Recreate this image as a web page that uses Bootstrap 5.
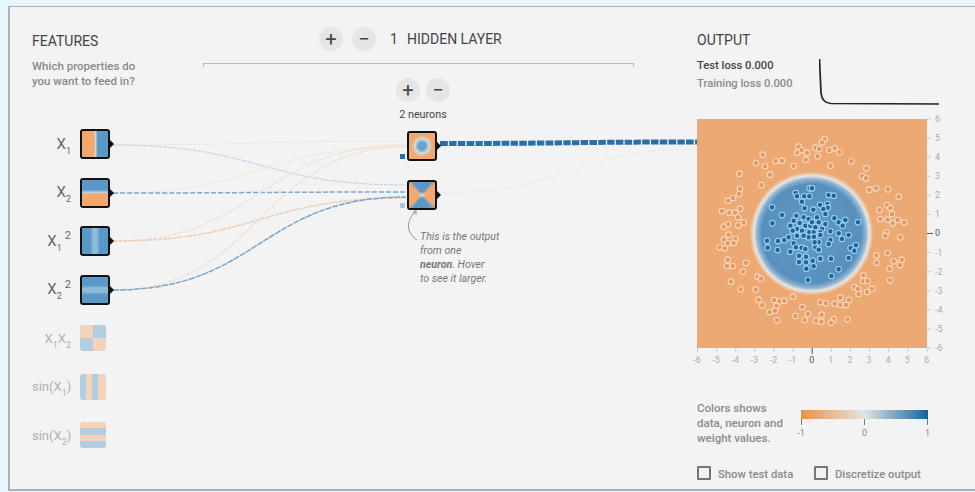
<!DOCTYPE html>
<html lang="en">
<head>
  <meta charset="UTF-8">
  <meta name="viewport" content="width=device-width, initial-scale=1.0">
  <title>Neural network playground</title>
  <link href="https://cdn.jsdelivr.net/npm/bootstrap@5.3.0/dist/css/bootstrap.min.css" rel="stylesheet">
  <style>
    html, body { height: 100%; overflow: hidden; }
    body { background: #e6f6fc; font-family: Roboto, "Liberation Sans", sans-serif; color: #444; padding: 6px 0 1px 8px; }
    .pg-frame { position: relative; isolation: isolate; height: 485px; background: #f3f3f3; border: 1px solid #a9b3b5; border-left-width: 2px; border-right: 0; border-bottom-width: 2px; }
    .pg-wires { position: absolute; left: -10px; top: -7px; z-index: -1; }
    .pg-title { font-size: 14px; line-height: 20px; height: 20px; color: #444; text-transform: uppercase; }
    .col-features { width: 193px; padding: 24px 0 0 22px; flex: none; }
    .col-network { width: 431px; padding-top: 20px; flex: none; }
    .col-output { margin-left: 63px; padding-top: 23px; flex: none; width: 270px; }
    .pg-sub { margin-top: 8px; font-size: 11.5px; line-height: 15px; font-weight: 500; color: #8a8a8a; height: 30px; }
    .feat-list { margin-top: 31px; }
    .feat-row { height: 48.5px; width: 88px; color: #666; }
    .feat-label { width: 39px; margin-right: 9px; text-align: right; font-size: 15px; line-height: 1; white-space: nowrap; flex: none; }
    .feat-label sub { font-size: 9px; bottom: -.55em; }
    .feat-label sup { font-size: 11px; top: -.6em; margin-left: 3px; }
    .feat-off .feat-label { color: #b0b0b0; font-size: 13px; }
    .thumb { position: relative; width: 30px; height: 30px; flex: none; border: 2px solid #111; border-radius: 3px; }
    .thumb::after { content: ""; position: absolute; right: -6px; top: 50%; margin-top: -4px; border: 4px solid transparent; border-left-color: #111; border-right-width: 0; }
    .feat-off .thumb { width: 26px; height: 26px; border: 0; opacity: .42; }
    .feat-off .thumb::after { display: none; }
    .th-x1 { background: linear-gradient(90deg, #f2a86e 46%, #cfd9dc 52%, #5a98c8 60%); }
    .th-x2 { background: linear-gradient(180deg, #5a98c8 38%, #b9d3e3 48%, #f2a86e 54%); }
    .th-x1q { background: linear-gradient(90deg, #5a98c8 32%, #8dbbd8 42% 58%, #5a98c8 68%); }
    .th-x2q { background: linear-gradient(180deg, #5a98c8 32%, #8dbbd8 42% 58%, #5a98c8 68%); }
    .th-xx { background: conic-gradient(#5a98c8 25%, #f2a86e 25% 50%, #5a98c8 50% 75%, #f2a86e 75%); }
    .th-s1 { background: repeating-linear-gradient(90deg, #5a98c8 0 6px, #f2a86e 6px 12px, #5a98c8 12px 18px, #f2a86e 18px 26px); }
    .th-s2 { background: repeating-linear-gradient(180deg, #f2a86e 0 6px, #5a98c8 6px 13px); }
    .round-btn { width: 24px; height: 24px; padding: 0; border: 0; border-radius: 50%; background: #e6e6e6; color: #444; font-size: 20px; line-height: 23px; }
    .layer-head { padding-left: 116px; height: 24px; }
    .layer-head .gap-btns { gap: 9px; }
    .layer-num { margin-left: 14px; font-size: 14px; line-height: 24px; width: 17px; }
    .layer-name { font-size: 14px; line-height: 24px; text-transform: uppercase; }
    .bracket { margin-top: 12px; height: 4px; border: 1px solid #bbb; border-bottom: 0; }
    .neuron-col { margin: 11px 0 0 190px; width: 60px; }
    .neuron-gap { gap: 6px; }
    .neuron-count { margin-top: 6px; font-size: 10.8px; line-height: 14px; white-space: nowrap; color: #444; }
    .neuron { position: relative; left: -1px; width: 30px; height: 30px; border: 2px solid #111; border-radius: 3px; }
    .neuron::after { content: ""; position: absolute; right: -6px; top: 50%; margin-top: -4px; border: 4px solid transparent; border-left-color: #111; border-right-width: 0; }
    .neuron-a { margin-top: 9px; background: radial-gradient(circle, #68a6d0 0 4px, #cfdde0 7px, #f2a86e 10.500px); }
    .neuron-b { margin-top: 19px; background: radial-gradient(circle, rgba(226,232,228,.8) 0, rgba(226,232,228,0) 4px), conic-gradient(#5a98c8 9%, #f2a86e 14% 36%, #5a98c8 41% 59%, #f2a86e 64% 86%, #5a98c8 91%); }
    .wt-tick { position: absolute; left: -9px; bottom: 0; width: 5px; height: 5px; background: #2a6fa8; }
    .neuron-b .wt-tick { background: #a9c8df; }
    .note-text { margin: 20px 0 0 217px; font-size: 10.6px; line-height: 14px; font-style: italic; color: #777; }
    .note-text b { font-weight: 700; }
    .stat-row { margin-top: 7px; height: 57px; }
    .stat-text { width: 122px; font-size: 11.2px; line-height: 18px; font-weight: 500; color: #8a8a8a; }
    .stat-test { color: #444; }
    .heat-plot { display: block; overflow: visible; }
    .heat-plot text { font-size: 9px; fill: #aaa; font-family: Roboto, "Liberation Sans", sans-serif; }
    .heat-plot .zero { fill: #555; }
    .legend-row { margin-top: 33px; }
    .legend-text { width: 100px; font-size: 11.500px; line-height: 15px; font-weight: 500; color: #8a8a8a; }
    .legend-svg text { font-size: 9px; fill: #888; font-family: Roboto, "Liberation Sans", sans-serif; }
    .check-row { margin-top: 20px; color: #8a8a8a; font-weight: 500; }
    .check-row .form-check { min-height: 0; margin: 0; padding-left: 21px; line-height: 14px; }
    .check-row .form-check:first-child { width: 117px; }
    .check-row .form-check-input { width: 14px; height: 14px; margin: 0 0 0 -21px; background-color: transparent; border: 2px solid #777; border-radius: 1px; }
    .check-row .form-check-label { font-size: 11.300px; }
  </style>
</head>
<body>
  <div class="pg-frame d-flex">
    <!-- wires go behind the nodes -->
    <svg class="pg-wires" width="975" height="492" fill="none">
      <path d="M113 145C260 145 260 141 406 141" stroke="#e6e9ec" stroke-width="1"/>
      <path d="M113 145C260 145 260 185 406 185" stroke="#c3d6e5" stroke-width="1.200" stroke-dasharray="4 1"/>
      <path d="M113 193C260 193 260 147 406 147" stroke="#f1e7dc" stroke-width="1"/>
      <path d="M113 193C260 193 260 192 406 192" stroke="#7ba8cb" stroke-width="1.500" stroke-dasharray="5 2"/>
      <path d="M113 241C260 241 260 145 406 145" stroke="#efdecd" stroke-width="1.100" stroke-dasharray="4 1"/>
      <path d="M113 241C260 241 260 198 406 198" stroke="#ebcdb2" stroke-width="1.500" stroke-dasharray="4 1"/>
      <path d="M113 290C260 290 260 147 406 147" stroke="#eedccb" stroke-width="1.100" stroke-dasharray="4 1"/>
      <path d="M113 290C260 290 260 197 406 197" stroke="#78a5c8" stroke-width="1.500" stroke-dasharray="6 1"/>
      <path d="M441 193C570 193 570 149 697 149" stroke="#efebe6" stroke-width="1.200"/>
      <path d="M440 143.500C570 143.500 570 142 697 142" stroke="#2a6fa8" stroke-width="5" stroke-dasharray="7.500 1.300"/>
      <path d="M415 212C407 220 405 232 417 240" stroke="#888" stroke-width=".9"/>
      <path d="M412.500 213L416 210.500L416 215" stroke="#888" stroke-width=".9"/>
    </svg>

    <div class="col-features">
      <div class="pg-title">Features</div>
      <div class="pg-sub">Which properties do<br>you want to feed in?</div>
      <div class="feat-list">
        <div class="feat-row d-flex align-items-center"><div class="feat-label">X<sub>1</sub></div><div class="thumb th-x1"></div></div>
        <div class="feat-row d-flex align-items-center"><div class="feat-label">X<sub>2</sub></div><div class="thumb th-x2"></div></div>
        <div class="feat-row d-flex align-items-center"><div class="feat-label">X<sub>1</sub><sup>2</sup></div><div class="thumb th-x1q"></div></div>
        <div class="feat-row d-flex align-items-center"><div class="feat-label">X<sub>2</sub><sup>2</sup></div><div class="thumb th-x2q"></div></div>
        <div class="feat-row feat-off d-flex align-items-center"><div class="feat-label">X<sub>1</sub>X<sub>2</sub></div><div class="thumb th-xx"></div></div>
        <div class="feat-row feat-off d-flex align-items-center"><div class="feat-label">sin(X<sub>1</sub>)</div><div class="thumb th-s1"></div></div>
        <div class="feat-row feat-off d-flex align-items-center"><div class="feat-label">sin(X<sub>2</sub>)</div><div class="thumb th-s2"></div></div>
      </div>
    </div>

    <div class="col-network">
      <div class="layer-head d-flex">
        <div class="d-flex gap-btns">
          <button class="round-btn" type="button">+</button>
          <button class="round-btn" type="button">&minus;</button>
        </div>
        <div class="layer-num">1</div>
        <div class="layer-name">Hidden layer</div>
      </div>
      <div class="bracket"></div>
      <div class="neuron-col d-flex flex-column align-items-center">
        <div class="d-flex neuron-gap">
          <button class="round-btn" type="button">+</button>
          <button class="round-btn" type="button">&minus;</button>
        </div>
        <div class="neuron-count">2 neurons</div>
        <div class="neuron neuron-a"><span class="wt-tick"></span></div>
        <div class="neuron neuron-b"><span class="wt-tick"></span></div>
      </div>
      <div class="note-text">This is the output<br>from one<br><b>neuron</b>. Hover<br>to see it larger.</div>
    </div>

    <div class="col-output">
      <div class="pg-title">Output</div>
      <div class="stat-row d-flex">
        <div class="stat-text"><div class="stat-test">Test loss 0.000</div><div>Training loss 0.000</div></div>
        <svg width="122" height="50" fill="none"><path d="M0.500 2L2 36Q3 46 12 46.500L120 47" stroke="#222" stroke-width="1.700"/></svg>
      </div>
      <svg id="heatPlot" class="heat-plot" width="256" height="254">
        <defs>
          <radialGradient id="heatGrad" gradientUnits="userSpaceOnUse" cx="114.500" cy="119.500" r="62">
            <stop offset="0" stop-color="#5f9ac4"/>
            <stop offset=".8" stop-color="#5890bd"/>
            <stop offset=".88" stop-color="#8fb6d3"/>
            <stop offset=".93" stop-color="#e8e6e0"/>
            <stop offset="1" stop-color="#eca973"/>
          </radialGradient>
        </defs>
        <rect x="0" y="5" width="230" height="229" fill="#eca973"/>
        <circle cx="114.500" cy="119.500" r="62" fill="url(#heatGrad)"/>
      </svg>
      <div class="legend-row d-flex">
        <div class="legend-text">Colors shows<br>data, neuron and<br>weight values.</div>
        <svg class="legend-svg" width="136" height="40">
          <defs>
            <linearGradient id="legendGrad">
              <stop offset="0" stop-color="#ed9042"/>
              <stop offset=".5" stop-color="#e4e4e0"/>
              <stop offset="1" stop-color="#0f64a6"/>
            </linearGradient>
          </defs>
          <rect x="4" y="9" width="127" height="9" fill="url(#legendGrad)"/>
          <path d="M4.500 18v6M67.500 18v6M130.500 18v6" stroke="#777"/>
          <text x="4" y="35" text-anchor="middle">-1</text>
          <text x="67.500" y="35" text-anchor="middle">0</text>
          <text x="130.500" y="35" text-anchor="middle">1</text>
        </svg>
      </div>
      <div class="check-row d-flex">
        <div class="form-check"><input class="form-check-input" type="checkbox" id="showTest"><label class="form-check-label" for="showTest">Show test data</label></div>
        <div class="form-check"><input class="form-check-input" type="checkbox" id="discretize"><label class="form-check-label" for="discretize">Discretize output</label></div>
      </div>
    </div>
  </div>

  <script src="https://cdn.jsdelivr.net/npm/bootstrap@5.3.0/dist/js/bootstrap.bundle.min.js"></script>
  <script>
    // points were read per quadrant, each one 115px wide, coords are 3x
    const orange = [
      [0,0,[[305,83],[301,101],[314,94],[330,101],[326,122],[197,107],[177,132],[204,142],[236,126],[255,125],[290,141],[219,167],[127,164],[193,198],[129,210],[126,225],[108,237],[93,245],[130,269],[75,276],[97,281],[114,281],[123,295],[140,310],[124,319],[93,316],[80,323]]],
      [1,0,[[38,60],[30,70],[10,86],[22,90],[52,93],[68,88],[82,100],[17,112],[118,127],[55,140],[163,148],[150,171],[162,178],[172,212],[192,208],[228,211],[260,233],[225,258],[235,267],[202,273],[240,285],[205,300],[227,302],[242,313],[257,303],[277,310],[224,340]]],
      [0,1,[[95,2],[115,15],[81,17],[92,28],[110,27],[68,40],[83,43],[92,77],[90,96],[107,96],[147,87],[138,113],[182,128],[192,134],[102,143],[131,166],[176,167],[185,197],[196,214],[231,198],[248,202],[262,200],[288,188],[238,216],[234,230],[218,234],[316,219],[333,240],[295,246],[323,258],[240,259]]],
      [1,1,[[220,5],[265,10],[227,57],[193,64],[194,86],[245,82],[269,77],[264,93],[233,104],[234,139],[154,124],[154,141],[167,141],[127,159],[138,165],[140,180],[180,164],[165,174],[85,191],[111,198],[25,205],[42,208],[68,209],[85,213],[102,213],[29,242],[12,260],[28,263],[65,256],[57,266],[107,256]]]
    ];
    const blue = [
      [0,0,[[225,265],[255,288],[226,313],[296,222],[338,208],[300,232],[322,232],[337,232],[315,248],[323,268],[298,290],[320,295],[290,305],[308,312],[335,300],[280,320],[300,330],[325,320],[287,335],[315,335],[337,340],[340,320]]],
      [1,0,[[0,208],[50,228],[65,230],[24,258],[46,255],[47,266],[34,270],[4,272],[40,285],[67,298],[80,310],[100,303],[92,320],[138,310],[15,295],[0,310],[20,310],[40,315],[10,325],[30,330],[55,337],[5,340],[25,340],[80,343]]],
      [0,1,[[210,20],[212,41],[243,21],[242,48],[262,18],[275,10],[290,28],[280,53],[297,40],[314,41],[306,65],[306,84],[327,68],[327,85],[328,104],[333,138],[325,45],[335,10],[320,5],[300,5]]],
      [1,1,[[6,8],[20,25],[55,18],[50,30],[90,15],[110,3],[10,40],[20,47],[116,42],[132,34],[127,50],[25,74],[57,74],[110,72],[2,80],[5,97],[80,106],[58,126],[25,3],[8,25]]]
    ];
    const plot = document.getElementById('heatPlot');
    const NS = 'http://www.w3.org/2000/svg';

    function add(tag, attrs, text) {
      const el = document.createElementNS(NS, tag);
      for (const k in attrs) el.setAttribute(k, attrs[k]);
      if (text !== undefined) el.textContent = text;
      plot.appendChild(el);
    }
    function drawPoints(groups, fill, ring) {
      groups.forEach(([qx, qy, pts]) => pts.forEach(([x, y]) => {
        add('circle', { cx: qx * 115 + x / 3, cy: 5 + qy * 115 + y / 3, r: 2.8, fill: fill, stroke: ring, 'stroke-width': 1.1 });
      }));
    }
    drawPoints(orange, '#e09a68', '#fbd9bb');
    drawPoints(blue, '#1a659f', '#a3d2ea');

    // axes
    for (let v = -6; v <= 6; v++) {
      const pos = (v + 6) * 19.12;
      const zero = v === 0;
      add('path', { d: `M${pos + 0.5} 234v${zero ? 6 : 4}`, stroke: zero ? '#555' : '#ccc' });
      add('text', { x: pos, y: 249, 'text-anchor': 'middle', class: zero ? 'zero' : '' }, v);
      const py = 5 + (6 - v) * 19.08;
      add('path', { d: `M230 ${py}h${zero ? 6 : 4}`, stroke: zero ? '#555' : '#ccc' });
      add('text', { x: 238, y: py + 3, class: zero ? 'zero' : '' }, v);
    }
  </script>
</body>
</html>
